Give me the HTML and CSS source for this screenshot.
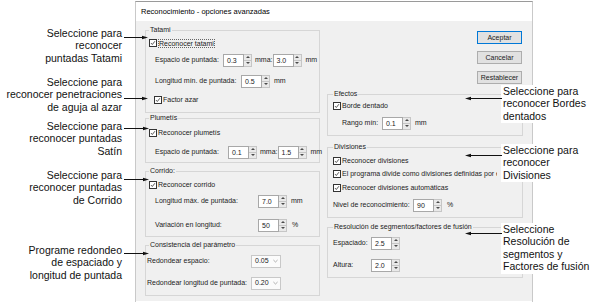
FILE: index.html
```html
<!DOCTYPE html>
<html lang="es">
<head>
  <meta charset="UTF-8">
  <title>Reconocimiento - opciones avanzadas</title>
  <link rel="stylesheet" href="styles.css">
</head>
<body>

<div class="canvas">

  <!-- the dialog itself -->
  <div class="dialog">
    <div class="titlebar">Reconocimiento - opciones avanzadas</div>
    <div class="dlg-body">

      <div class="col col-left">
        <fieldset class="grp pb6">
          <legend>Tatami</legend>
          <div class="row mt3">
            <span class="chk"><svg viewBox="0 0 8 8"><polyline points="1.3,4.1 3.1,6 6.6,1.6"/></svg></span>
            <span class="focus">Reconocer tatami</span>
          </div>
          <div class="row mt5 indent">
            <span class="lbl w68">Espacio de puntada:</span>
            <span class="spin"><span class="spin-field">0.3</span><span class="spin-btns"><span class="up"></span><span class="down"></span></span></span>
            <span class="unit unit-mid">mma:</span>
            <span class="spin"><span class="spin-field">3.0</span><span class="spin-btns"><span class="up"></span><span class="down"></span></span></span>
            <span class="unit">mm</span>
          </div>
          <div class="row mt9 indent">
            <span class="lbl w86">Longitud mín. de puntada:</span>
            <span class="spin"><span class="spin-field">0.5</span><span class="spin-btns"><span class="up"></span><span class="down"></span></span></span>
            <span class="unit">mm</span>
          </div>
          <div class="row mt7 indent-sm">
            <span class="chk"><svg viewBox="0 0 8 8"><polyline points="1.3,4.1 3.1,6 6.6,1.6"/></svg></span>
            <span>Factor azar</span>
          </div>
        </fieldset>

        <fieldset class="grp mt1 pb4">
          <legend>Plumetís</legend>
          <div class="row mt5">
            <span class="chk"><svg viewBox="0 0 8 8"><polyline points="1.3,4.1 3.1,6 6.6,1.6"/></svg></span>
            <span>Reconocer plumetís</span>
          </div>
          <div class="row mt7 indent">
            <span class="lbl w73">Espacio de puntada:</span>
            <span class="spin"><span class="spin-field">0.1</span><span class="spin-btns"><span class="up"></span><span class="down"></span></span></span>
            <span class="unit unit-mid">mma:</span>
            <span class="spin"><span class="spin-field">1.5</span><span class="spin-btns"><span class="up"></span><span class="down"></span></span></span>
            <span class="unit">mm</span>
          </div>
        </fieldset>

        <fieldset class="grp mt4 pb5">
          <legend>Corrido:</legend>
          <div class="row mt4">
            <span class="chk"><svg viewBox="0 0 8 8"><polyline points="1.3,4.1 3.1,6 6.6,1.6"/></svg></span>
            <span>Reconocer corrido</span>
          </div>
          <div class="row mt4 indent">
            <span class="lbl w103">Longitud máx. de puntada:</span>
            <span class="spin"><span class="spin-field">7.0</span><span class="spin-btns"><span class="up"></span><span class="down"></span></span></span>
            <span class="unit">mm</span>
          </div>
          <div class="row mt12 indent">
            <span class="lbl w103">Variación en longitud:</span>
            <span class="spin"><span class="spin-field">50</span><span class="spin-btns"><span class="up"></span><span class="down"></span></span></span>
            <span class="unit unit-pct">%</span>
          </div>
        </fieldset>

        <fieldset class="grp mt4 pb6">
          <legend>Consistencia del parámetro</legend>
          <div class="row mt6 flush">
            <span class="lbl w104">Redondear espacio:</span>
            <span class="select">0.05 <svg viewBox="0 0 6 4"><polyline points="0.5,0.8 3,3.2 5.5,0.8"/></svg></span>
          </div>
          <div class="row mt10 flush">
            <span class="lbl w104">Redondear longitud de puntada:</span>
            <span class="select">0.20 <svg viewBox="0 0 6 4"><polyline points="0.5,0.8 3,3.2 5.5,0.8"/></svg></span>
          </div>
        </fieldset>
      </div>

      <div class="col col-right">
        <div class="btn-stack">
          <div class="btn btn-default">Aceptar</div>
          <div class="btn">Cancelar</div>
          <div class="btn">Restablecer</div>
        </div>

        <fieldset class="grp grp-r mt6 pb6">
          <legend>Efectos</legend>
          <div class="row mt2">
            <span class="chk"><svg viewBox="0 0 8 8"><polyline points="1.3,4.1 3.1,6 6.6,1.6"/></svg></span>
            <span>Borde dentado</span>
          </div>
          <div class="row mt5 indent-lg">
            <span class="lbl w40">Rango mín:</span>
            <span class="spin"><span class="spin-field">0.1</span><span class="spin-btns"><span class="up"></span><span class="down"></span></span></span>
            <span class="unit">mm</span>
          </div>
        </fieldset>

        <fieldset class="grp grp-r mt7 pb6">
          <legend>Divisiones</legend>
          <div class="row mt4">
            <span class="chk"><svg viewBox="0 0 8 8"><polyline points="1.3,4.1 3.1,6 6.6,1.6"/></svg></span>
            <span>Reconocer divisiones</span>
          </div>
          <div class="row mt1">
            <span class="chk"><svg viewBox="0 0 8 8"><polyline points="1.3,4.1 3.1,6 6.6,1.6"/></svg></span>
            <span class="clip">El programa divide como divisiones definidas por el usuario</span>
          </div>
          <div class="row mt2">
            <span class="chk"><svg viewBox="0 0 8 8"><polyline points="1.3,4.1 3.1,6 6.6,1.6"/></svg></span>
            <span>Reconocer divisiones automáticas</span>
          </div>
          <div class="row mt5">
            <span class="lbl w80">Nivel de reconocimiento:</span>
            <span class="spin"><span class="spin-field">90</span><span class="spin-btns"><span class="up"></span><span class="down"></span></span></span>
            <span class="unit unit-pct">%</span>
          </div>
        </fieldset>

        <fieldset class="grp grp-r mt5 pb6">
          <legend>Resolución de segmentos/factores de fusión</legend>
          <div class="row mt6">
            <span class="lbl w38">Espaciado:</span>
            <span class="spin"><span class="spin-field">2.5</span><span class="spin-btns"><span class="up"></span><span class="down"></span></span></span>
          </div>
          <div class="row mt10">
            <span class="lbl w38">Altura:</span>
            <span class="spin"><span class="spin-field">2.0</span><span class="spin-btns"><span class="up"></span><span class="down"></span></span></span>
          </div>
        </fieldset>
      </div>

    </div>
  </div>

  <!-- callouts on the left -->
  <div class="note note-left n1">Seleccione para<br>reconocer<br>puntadas Tatami</div>
  <div class="note note-left n2">Seleccione para<br>reconocer penetraciones<br>de aguja al azar</div>
  <div class="note note-left n3">Seleccione para<br>reconocer puntadas<br>Satín</div>
  <div class="note note-left n4">Seleccione para<br>reconocer puntadas<br>de Corrido</div>
  <div class="note note-left n5">Programe redondeo<br>de espaciado y<br>longitud de puntada</div>

  <!-- callouts on the right -->
  <div class="note note-right n6">Seleccione para<br>reconocer Bordes<br>dentados</div>
  <div class="note note-right n7">Seleccione para<br>reconocer<br>Divisiones</div>
  <div class="note note-right n8">Seleccione<br>Resolución de<br>segmentos y<br>Factores de fusión</div>

  <svg class="arrows" width="592" height="303" viewBox="0 0 592 303">
    <g stroke="#111" stroke-width="1">
      <line x1="124" y1="37.5" x2="145" y2="37.5"/>
      <line x1="124" y1="98.5" x2="145" y2="98.5"/>
      <line x1="124" y1="128.5" x2="146" y2="128.5"/>
      <line x1="124" y1="179.5" x2="146" y2="179.5"/>
      <line x1="124" y1="253.5" x2="146" y2="253.5"/>
      <line x1="502" y1="98.5" x2="468" y2="98.5"/>
      <line x1="502" y1="155.5" x2="468" y2="155.5"/>
      <line x1="502" y1="233.5" x2="468" y2="233.5"/>
    </g>
    <g fill="#111">
      <polygon points="148,37.5 142,35.7 142,39.3"/>
      <polygon points="148,98.5 142,96.7 142,100.3"/>
      <polygon points="149,128.5 143,126.7 143,130.3"/>
      <polygon points="149,179.5 143,177.7 143,181.3"/>
      <polygon points="149,253.5 143,251.7 143,255.3"/>
      <polygon points="465,98.5 471,96.7 471,100.3"/>
      <polygon points="465,155.5 471,153.7 471,157.3"/>
      <polygon points="465,233.5 471,231.7 471,235.3"/>
    </g>
  </svg>

</div>

</body>
</html>
```

FILE: styles.css
```css
/* Page */
body {
  margin: 0;
  background-color: #fff;
  font-family: 'Liberation Sans', Arial, sans-serif;
  color: #111;
}

.canvas {
  position: relative;
  width: 592px;
  height: 303px;
  overflow: hidden;
}

/* Dialog window */
.dialog {
  box-sizing: border-box;
  width: 398px;
  height: 301px;
  margin: 1px 0 0 135px;
  border: 1px solid #c9c9c9;
  border-top-color: #9a9a9a;
  border-bottom: none;
  font-size: 7px;
  color: #1b1b1b;
}

.titlebar {
  height: 19px;
  line-height: 19px;
  padding-left: 5px;
  background-color: #fff;
  font-size: 7.5px;
  color: #000;
}

.dlg-body {
  display: flex;
  gap: 7px;
  height: 280px;
  box-sizing: border-box;
  padding: 5px 0 0 9px;
  background-color: #f0f0f0;
}

.col {
  display: flex;
  flex-direction: column;
}
.col-left {
  width: 175px;
}
.col-right {
  width: 196px;
}

/* Group boxes */
.grp {
  box-sizing: border-box;
  min-width: 0;
  width: 100%;
  margin: 0;
  padding: 0 3px;
  border: 1px solid #d6d6d6;
}
.grp-r {
  padding-left: 5px;
}
.grp legend {
  padding: 0 1px;
  line-height: 8px;
  font-size: 7px;
}

/* Rows inside group boxes */
.row {
  display: flex;
  align-items: center;
  height: 12px;
  line-height: 12px;
  white-space: nowrap;
}
.indent { margin-left: 6px; }
.indent-sm { margin-left: 5px; }
.indent-lg { margin-left: 9px; }
.flush { margin-left: -2px; }

.mt1 { margin-top: 1px; }
.mt2 { margin-top: 2px; }
.mt3 { margin-top: 3px; }
.mt4 { margin-top: 4px; }
.mt5 { margin-top: 5px; }
.mt6 { margin-top: 6px; }
.mt7 { margin-top: 7px; }
.mt9 { margin-top: 9px; }
.mt10 { margin-top: 10px; }
.mt12 { margin-top: 12px; }
.pb4 { padding-bottom: 4px; }
.pb5 { padding-bottom: 5px; }
.pb6 { padding-bottom: 6px; }

/* Label widths line the fields up */
.lbl { flex: none; }
.w38 { width: 38px; }
.w40 { width: 40px; }
.w68 { width: 68px; }
.w73 { width: 73px; }
.w80 { width: 80px; }
.w86 { width: 86px; }
.w103 { width: 103px; }
.w104 { width: 104px; }

.unit {
  margin-left: 4px;
}
.unit-mid {
  width: 22px;
  margin-left: 3px;
}
.unit-pct {
  margin-left: 5px;
}

/* long option text runs under the callout */
.clip {
  max-width: 155px;
  overflow: hidden;
}

/* Checkbox */
.chk {
  box-sizing: border-box;
  flex: none;
  width: 8px;
  height: 8px;
  margin-right: 1px;
  border: 1px solid #333;
  background-color: #fff;
}
.chk svg {
  display: block;
  width: 6px;
  height: 6px;
  fill: none;
  stroke: #222;
  stroke-width: 1;
}

.focus {
  outline: 1px dotted #666;
  outline-offset: -1px;
  line-height: 9px;
  padding: 0 1px;
}

/* Spin box */
.spin {
  display: flex;
  flex: none;
  height: 13px;
}
.spin-field {
  box-sizing: border-box;
  width: 21px;
  padding-left: 3px;
  border: 1px solid #a8a8a8;
  background-color: #fff;
  line-height: 11px;
  font-size: 7px;
}
.spin-btns {
  box-sizing: border-box;
  display: flex;
  flex-direction: column;
  width: 8px;
  border: 1px solid #c6c6c6;
  border-left: none;
  background-color: #e9e9e9;
}
.spin-btns span {
  flex: 1;
  display: flex;
  align-items: center;
  justify-content: center;
}
.spin-btns .up {
  border-bottom: 1px solid #c6c6c6;
}
.spin-btns span::after {
  content: "";
  border-left: 2px solid transparent;
  border-right: 2px solid transparent;
}
.spin-btns .up::after {
  border-bottom: 2px solid #4a4a4a;
}
.spin-btns .down::after {
  border-top: 2px solid #4a4a4a;
}

/* Drop-down */
.select {
  box-sizing: border-box;
  display: flex;
  align-items: center;
  justify-content: space-between;
  flex: none;
  width: 30px;
  height: 13px;
  padding: 0 2px 0 3px;
  border: 1px solid #c8c8c8;
  background-color: #fbfbfb;
  font-size: 7px;
}
.select svg {
  width: 5px;
  height: 4px;
  fill: none;
  stroke: #8a8a8a;
  stroke-width: 0.8;
}

/* Buttons */
.btn-stack {
  display: flex;
  flex-direction: column;
  align-items: flex-end;
  gap: 7px;
  margin: 5px 1px 0 0;
}
.btn {
  box-sizing: border-box;
  width: 45px;
  height: 13px;
  line-height: 11px;
  text-align: center;
  border: 1px solid #adadad;
  background-color: #e1e1e1;
  font-size: 7px;
}
.btn-default {
  border-color: #0078d7;
}

/* Callouts */
.note {
  position: absolute;
  font-size: 10.5px;
  line-height: 12.4px;
  color: #111;
  white-space: nowrap;
}
.note-left {
  left: 0;
  width: 122px;
  text-align: right;
}
.note-right {
  left: 501px;
  padding: 0 3px 1px 2px;
  background-color: #fff;
}
.n1 { top: 27px; }
.n2 { top: 76px; }
.n3 { top: 120px; }
.n4 { top: 169px; }
.n5 { top: 244px; }
.n6 { top: 85px; }
.n7 { top: 144px; }
.n8 { top: 223px; }

.arrows {
  position: absolute;
  top: 0;
  left: 0;
  pointer-events: none;
}
```
